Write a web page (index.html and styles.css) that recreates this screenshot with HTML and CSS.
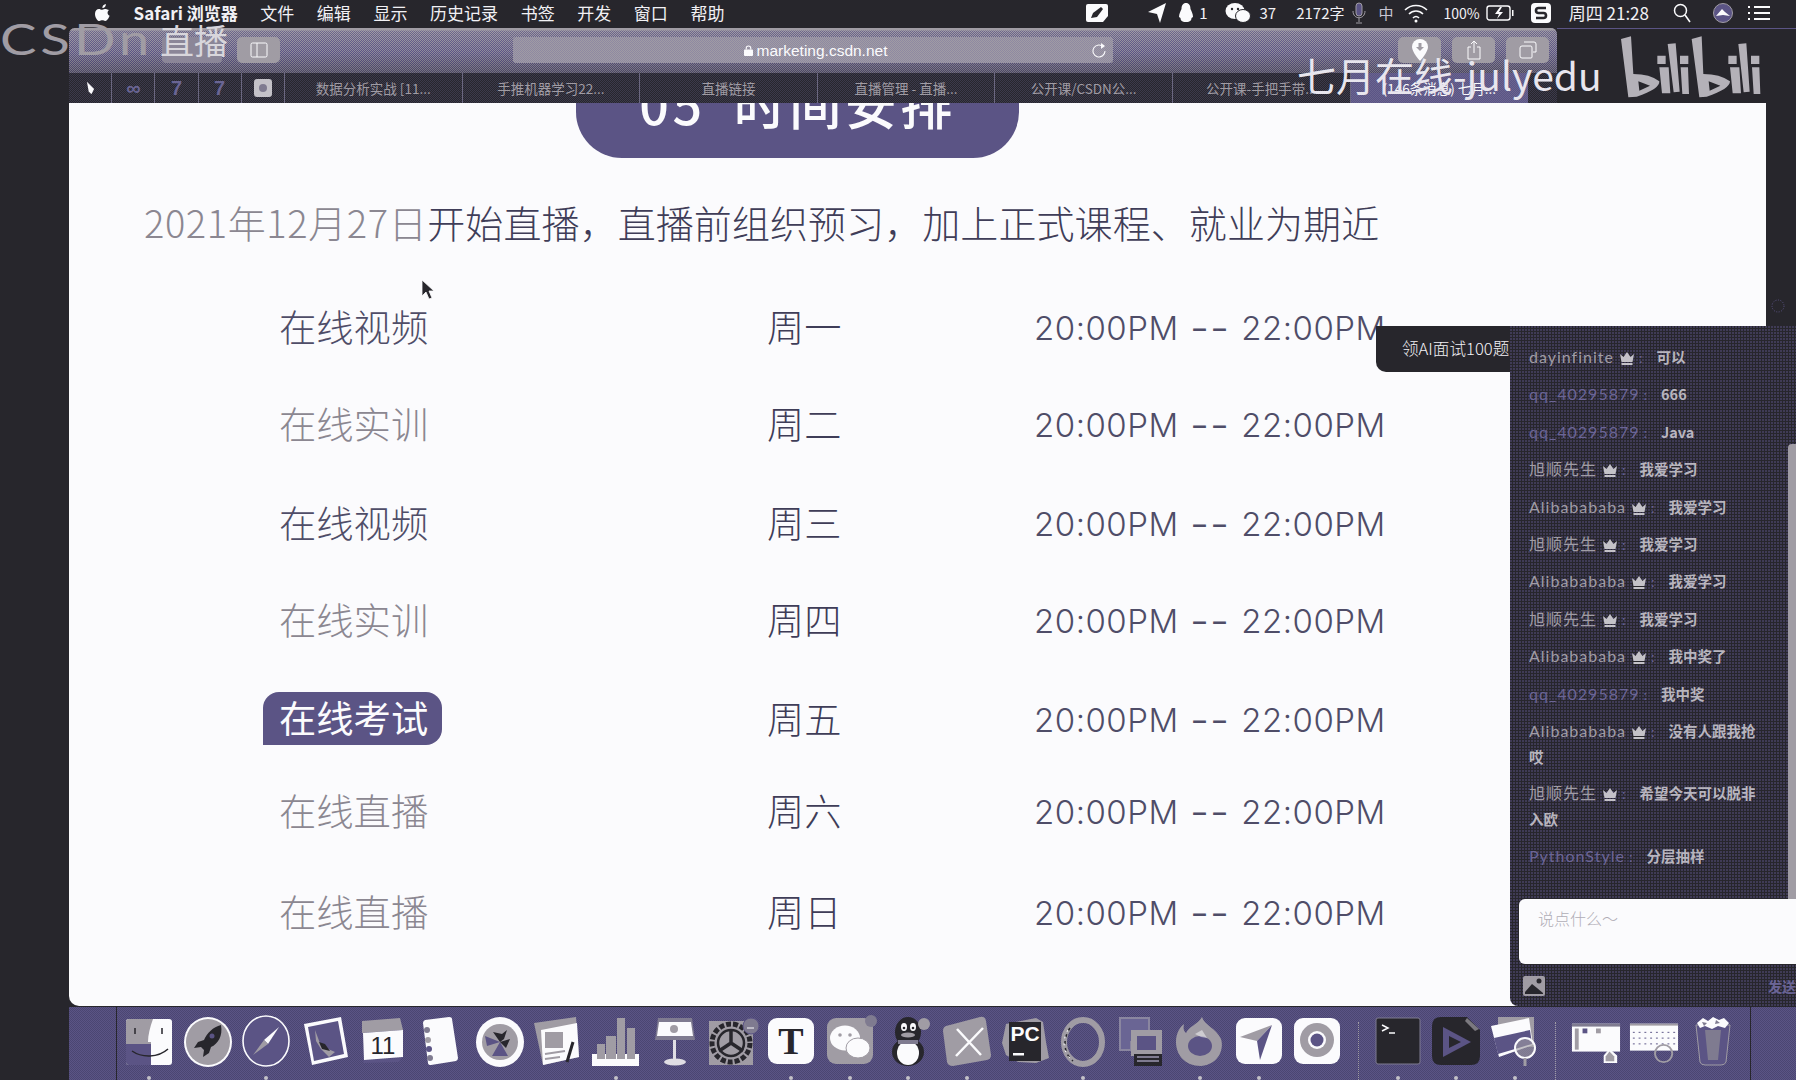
FILE: index.html
```html
<!DOCTYPE html>
<html lang="zh-CN">
<head>
<meta charset="utf-8">
<title>七月在线 直播</title>
<link rel="stylesheet" href="styles.css">
</head>
<body>
<div class="screen">
  <header class="menubar">
    <nav class="menu-left">
      <svg class="apple" viewBox="0 0 16 19" width="15" height="18"><path fill="#fbfbfd" d="M11.6 0c.1 1.2-.3 2.2-1 3-.7.8-1.700 1.300-2.700 1.200-.1-1.100.4-2.200 1-2.900C9.600.6 10.700.1 11.600 0zM15 6.400c-1 .7-1.600 1.700-1.600 2.900 0 1.400.8 2.500 2.200 3.100-.4 1.200-.9 2.200-1.600 3.200-.9 1.300-1.800 2.400-3.100 2.400-1.200 0-1.700-.7-3.100-.7s-2 .7-3.100.7c-1.300 0-2.300-1.200-3.200-2.500C.4 14 0 11.900 0 10.400 0 7.100 2.100 5.300 4.200 5.300c1.200 0 2.200.8 3 .8.700 0 1.900-.9 3.300-.9 1.100 0 2.900.4 4.500 1.200z"/></svg>
      <b class="menu-app">Safari 浏览器</b>
      <span>文件</span><span>编辑</span><span>显示</span><span>历史记录</span><span>书签</span><span>开发</span><span>窗口</span><span>帮助</span>
    </nav>
    <div class="menu-right">
      <svg class="st st-pen" viewBox="0 0 24 20" width="24" height="20"><path fill="#fbfbfd" d="M3 1h18q2 0 2 2v10l-5 6H3q-2 0-2-2V3q0-2 2-2z"/><path fill="#27262c" d="M6 15l2-5 8-6 2 2-6 8z"/></svg>
      <svg class="st st-loc" viewBox="0 0 20 22" width="20" height="22"><path fill="#fbfbfd" d="M1 10L19 1l-6 20-3-9z"/></svg>
      <svg class="st st-qq" viewBox="0 0 16 20" width="16" height="20"><path fill="#fbfbfd" d="M8 0c3 0 4.500 2.500 4.500 6 1 2 2.500 5 2.500 8l-1.500 1c0 2-1 4-5.500 4s-5.500-2-5.500-4L1 14c0-3 1.500-6 2.500-8C3.500 2.500 5 0 8 0z"/></svg>
      <span class="st-num">1</span>
      <svg class="st st-wx" viewBox="0 0 26 22" width="26" height="22"><ellipse cx="10" cy="9" rx="9.500" ry="8" fill="#fbfbfd"/><ellipse cx="18" cy="14" rx="7.500" ry="6.500" fill="#fbfbfd" stroke="#27262c"/><circle cx="7" cy="7" r="1.200" fill="#27262c"/><circle cx="13" cy="7" r="1.200" fill="#27262c"/></svg>
      <span class="st-num st-37">37</span>
      <span class="st-count">2172字</span>
      <svg class="st st-mic" viewBox="0 0 14 22" width="14" height="22"><rect x="4" y="1" width="6" height="13" rx="3" fill="#5b5485" stroke="#a09ca4"/><path fill="none" stroke="#a09ca4" d="M1 9c0 9 12 9 12 0M7 16v4M4 21h6"/></svg>
      <span class="st-zh">中</span>
      <svg class="st st-wifi" viewBox="0 0 24 20" width="24" height="20"><path fill="none" stroke="#fbfbfd" stroke-width="1.600" d="M1 7c6-6 16-6 22 0M5 11c4-4 10-4 14 0M9 15c2-2 4-2 6 0"/><circle cx="12" cy="18" r="1.500" fill="#fbfbfd"/></svg>
      <span class="st-pct">100%</span>
      <svg class="st st-bat" viewBox="0 0 28 18" width="28" height="18"><rect x="1" y="2" width="23" height="14" rx="2.500" fill="none" stroke="#fbfbfd" stroke-width="1.400"/><path fill="#fbfbfd" d="M26 6h1.500v6H26zM14 3l-5 7h4l-2 5 6-7h-4l3-5z"/></svg>
      <svg class="st st-s" viewBox="0 0 20 20" width="20" height="20"><rect width="20" height="20" rx="4" fill="#fbfbfd"/><path fill="none" stroke="#27262c" stroke-width="2.600" d="M15 5H7.500Q5 5 5 7.500T7.500 10h5q2.500 0 2.500 2.500T12.500 15H5"/></svg>
      <span class="st-time">周四 21:28</span>
      <svg class="st st-search" viewBox="0 0 18 20" width="18" height="20"><circle cx="7.500" cy="7.500" r="6" fill="none" stroke="#fbfbfd" stroke-width="1.500"/><path stroke="#fbfbfd" stroke-width="1.600" d="M12 12l5 7"/></svg>
      <svg class="st st-ava" viewBox="0 0 20 20" width="20" height="20"><circle cx="10" cy="10" r="9.500" fill="#5b5485" stroke="#a09ca4"/><path fill="#fbfbfd" d="M3 13l6-7 3 3 5 4-7-1z"/></svg>
      <svg class="st st-list" viewBox="0 0 22 16" width="22" height="16"><path stroke="#fbfbfd" stroke-width="2" d="M6 2h16M6 8h16M6 14h16"/><path stroke="#fbfbfd" stroke-width="2" d="M0 2h2M0 8h2M0 14h2"/></svg>
    </div>
  </header>

  <main class="desktop">
    <div class="window">
      <div class="browser-chrome">
        <div class="toolbar">
          <span class="nav-ghost"></span>
          <span class="tool-btn tool-side"><svg viewBox="0 0 18 16" width="18" height="16"><rect x="1" y="1" width="16" height="14" rx="1.500" fill="none" stroke="#fbfbfd"/><path stroke="#fbfbfd" d="M7 1v14"/></svg></span>
          <div class="address">
            <span class="address-text"><svg viewBox="0 0 10 12" width="9" height="11"><rect y="5" width="10" height="7" rx="1" fill="#fbfbfd"/><path fill="none" stroke="#fbfbfd" stroke-width="1.300" d="M2.500 5V3.500a2.500 2.500 0 0 1 5 0V5"/></svg> marketing.csdn.net</span>
            <svg class="reload" viewBox="0 0 16 16" width="16" height="16"><path fill="none" stroke="#fbfbfd" stroke-width="1.100" d="M12.500 5A6 6 0 1 0 14 9"/><path fill="#fbfbfd" d="M10 1l4 3-4 3z"/></svg>
          </div>
          <div class="tool-right">
            <span class="tool-btn"><svg viewBox="0 0 18 22" width="18" height="22"><path fill="#fbfbfd" d="M9 0a8 8 0 0 1 8 8c0 5-8 14-8 14S1 13 1 8a8 8 0 0 1 8-8z"/><path fill="#a09ca4" d="M7.500 4h3v4H13l-4 4-4-4h2.500z"/></svg></span>
            <span class="tool-btn"><svg viewBox="0 0 16 20" width="16" height="20"><path fill="none" stroke="#fbfbfd" d="M5 7H2v12h12V7h-3M8 13V1M5 4l3-3 3 3"/></svg></span>
            <span class="tool-btn"><svg viewBox="0 0 18 18" width="18" height="18"><path fill="none" stroke="#fbfbfd" d="M5 1h10q2 0 2 2v8h-3M1 7q0-2 2-2h9q1 0 1 2v9q0 1-1 1H3q-2 0-2-2z"/></svg></span>
          </div>
        </div>
        <div class="tabbar">
          <span class="pin"><svg viewBox="0 0 10 14" width="9" height="14"><path fill="#fbfbfd" d="M1 0l8 8-3 6-3-3z"/></svg></span>
          <span class="pin pin-p">∞</span>
          <span class="pin pin-p">7</span>
          <span class="pin pin-p">7</span>
          <span class="pin"><svg viewBox="0 0 18 18" width="18" height="18"><rect width="18" height="18" rx="3" fill="#c4c2c8"/><circle cx="9" cy="9" r="4" fill="#7f7b90"/></svg></span>
          <span class="tab">数据分析实战 [11...</span>
          <span class="tab">手推机器学习22...</span>
          <span class="tab">直播链接</span>
          <span class="tab">直播管理 - 直播...</span>
          <span class="tab">公开课/CSDN公...</span>
          <span class="tab">公开课-手把手带...</span>
          <span class="tab tab-active">(146条消息) 七月...</span>
        </div>
      </div>
      <section class="content">
        <h1 class="title-pill">05 时间安排</h1>
        <p class="intro"><span class="intro-date">2021年12月27日</span>开始直播，直播前组织预习，加上正式课程、就业为期近</p>
        <div class="schedule">
          <div class="s-name dark">在线视频</div><div class="s-day">周一</div><div class="s-time">20:00PM <span class="dash">--</span> 22:00PM</div>
          <div class="s-name">在线实训</div><div class="s-day">周二</div><div class="s-time">20:00PM <span class="dash">--</span> 22:00PM</div>
          <div class="s-name dark">在线视频</div><div class="s-day">周三</div><div class="s-time">20:00PM <span class="dash">--</span> 22:00PM</div>
          <div class="s-name">在线实训</div><div class="s-day">周四</div><div class="s-time">20:00PM <span class="dash">--</span> 22:00PM</div>
          <div class="s-name"><span class="s-hl">在线考试</span></div><div class="s-day">周五</div><div class="s-time">20:00PM <span class="dash">--</span> 22:00PM</div>
          <div class="s-name">在线直播</div><div class="s-day">周六</div><div class="s-time">20:00PM <span class="dash">--</span> 22:00PM</div>
          <div class="s-name">在线直播</div><div class="s-day">周日</div><div class="s-time">20:00PM <span class="dash">--</span> 22:00PM</div>
        </div>
      </section>
    </div>
  </main>

  <footer class="dock">
    <div class="tile run"><svg viewBox="0 0 50 50"><rect x="2" y="3" width="46" height="46" rx="3" fill="#fbfbfd"/><path fill="#a09ca4" d="M5 3h24c-3 8-5 16-5 23h3v23H5a3 3 0 0 1-3-3V6a3 3 0 0 1 3-3z"/><path fill="#5b5485" d="M2 28h25v21H5a3 3 0 0 1-3-3z"/><path fill="none" stroke="#27262c" stroke-width="1.500" d="M11 12v6M38 12v6M8 35c10 7 26 7 36-2"/></svg></div>
    <div class="tile"><svg viewBox="0 0 50 50"><ellipse cx="25" cy="26" rx="24" ry="25" fill="#fbfbfd"/><ellipse cx="25" cy="26" rx="22" ry="23" fill="#a09ca4"/><path fill="#27262c" d="M38 9c-8 2-14 8-17 15l-6 2-4 6 7-1 3 3-1 7 6-4 2-6c7-3 12-11 10-22z"/><circle cx="29" cy="20" r="2.500" fill="#5b5485"/></svg></div>
    <div class="tile run"><svg viewBox="0 0 50 50"><ellipse cx="25" cy="25" rx="23" ry="25" fill="#5b5485" stroke="#fbfbfd" stroke-width="1.600"/><path fill="#fbfbfd" d="M38 11L27 28l-4-4z"/><path fill="#a09ca4" d="M12 39l11-15 4 4z"/></svg></div>
    <div class="tile"><svg viewBox="0 0 50 50"><path fill="#fbfbfd" d="M5 8L42 1l7 40-36 8z"/><path fill="#5b5485" d="M9 11l30-6 6 33-30 7z"/><path fill="#a09ca4" d="M16 14l6 16 14 6-6 5-8-8-5-8z"/><path fill="#27262c" d="M20 26l6 2 5 7-8-2z"/></svg></div>
    <div class="tile"><svg viewBox="0 0 50 50"><path fill="#5b5485" d="M5 47l36-1 3-4-38 2z"/><path fill="#a09ca4" d="M4 5l38-3 3 12-41 3z"/><path fill="#fbfbfd" d="M5 17l40-3 0 27-39 3z"/><text class="cal-num" x="25" y="38">11</text></svg></div>
    <div class="tile"><svg viewBox="0 0 50 50"><path fill="#fbfbfd" d="M7 7q0-2 2-3L33 1q3 0 3 2l6 39q0 2-2 3L15 49q-3 0-3-2z"/><circle cx="11" cy="14" r="3" fill="#7f7b90"/><circle cx="12" cy="24" r="3" fill="#a09ca4"/><circle cx="13" cy="33" r="3" fill="#5b5485"/><circle cx="14" cy="42" r="3" fill="#7f7b90"/></svg></div>
    <div class="tile"><svg viewBox="0 0 50 50"><ellipse cx="25" cy="26" rx="24" ry="25" fill="#fbfbfd"/><circle cx="25" cy="26" r="18" fill="#a09ca4"/><path fill="#5b5485" d="M25 26l-8 14h16zM25 26L10 20l2 10z"/><path fill="#27262c" d="M25 26l-7-10 9 2 5-4-3 9zM25 26l6 6 4-9z"/></svg></div>
    <div class="tile"><svg viewBox="0 0 50 50"><path fill="#a09ca4" d="M1 7L43 1l3 40-36 8z"/><path fill="#fbfbfd" d="M8 14l36-7 2 34-36 8z"/><rect x="12" y="16" width="18" height="16" fill="#a09ca4"/><path stroke="#a09ca4" stroke-width="2" d="M12 38l20-3M12 43l15-2"/><path stroke="#27262c" stroke-width="3" d="M40 26l-6 20"/></svg></div>
    <div class="tile run"><svg viewBox="0 0 50 50"><rect x="1" y="38" width="47" height="12" fill="#fbfbfd"/><rect x="15" y="20" width="10" height="23" fill="#a09ca4"/><rect x="26" y="2" width="8" height="41" fill="#a09ca4"/><rect x="36" y="12" width="8" height="31" fill="#a09ca4"/><rect x="6" y="28" width="8" height="15" fill="#a09ca4"/></svg></div>
    <div class="tile"><svg viewBox="0 0 50 50"><path fill="#7f7b90" d="M8 2h34l3 22H5z"/><path fill="#fbfbfd" d="M9 6h32l2 14H7z"/><circle cx="24" cy="13" r="4" fill="#a09ca4"/><rect x="23" y="24" width="3" height="20" fill="#e0dee4"/><ellipse cx="25" cy="46" rx="11" ry="3.500" fill="#e0dee4"/></svg></div>
    <div class="tile"><svg viewBox="0 0 50 50"><rect x="1" y="5" width="44" height="44" fill="#a09ca4"/><circle cx="23" cy="27" r="19" fill="none" stroke="#27262c" stroke-width="5" stroke-dasharray="5 2"/><circle cx="23" cy="27" r="13" fill="none" stroke="#27262c" stroke-width="2.500"/><path stroke="#27262c" stroke-width="3.500" d="M23 27V13M23 27l12 8M23 27l-12 8"/><circle cx="43" cy="10" r="8" fill="#7f7b90" stroke="#5b5485"/><path stroke="#fbfbfd" d="M39 12h7"/></svg></div>
    <div class="tile run"><svg viewBox="0 0 50 50"><rect x="2" y="2" width="46" height="46" rx="9" fill="#fbfbfd"/><text class="t-glyph" x="25" y="38">T</text></svg></div>
    <div class="tile run"><svg viewBox="0 0 50 50"><rect x="2" y="2" width="46" height="46" rx="9" fill="#a09ca4"/><ellipse cx="20" cy="22" rx="15" ry="12.500" fill="#fbfbfd"/><ellipse cx="33" cy="32" rx="12" ry="10" fill="#fbfbfd" stroke="#a09ca4"/><circle cx="15" cy="19" r="1.800" fill="#a09ca4"/><circle cx="25" cy="19" r="1.800" fill="#a09ca4"/><circle cx="46" cy="5" r="6" fill="#7f7b90"/></svg></div>
    <div class="tile run"><svg viewBox="0 0 50 50"><ellipse cx="25" cy="16" rx="13" ry="15" fill="#27262c"/><ellipse cx="25" cy="36" rx="16" ry="14" fill="#27262c"/><ellipse cx="25" cy="37" rx="11" ry="12" fill="#fbfbfd"/><ellipse cx="21" cy="11" rx="3" ry="4" fill="#fbfbfd"/><ellipse cx="30" cy="11" rx="3" ry="4" fill="#fbfbfd"/><circle cx="21" cy="12" r="1.300" fill="#27262c"/><circle cx="30" cy="12" r="1.300" fill="#27262c"/><ellipse cx="25" cy="19" rx="7" ry="2.500" fill="#a09ca4"/><rect x="15" y="24" width="20" height="4" fill="#7f7b90"/><circle cx="41" cy="8" r="6" fill="#a09ca4"/></svg></div>
    <div class="tile run"><svg viewBox="0 0 50 50"><path fill="#a09ca4" d="M4 10L38 1q5-1 6 4l5 34q0 4-4 5L11 50q-5 0-6-4L1 15q0-4 3-5z"/><path stroke="#fbfbfd" stroke-width="2.500" d="M15 13l24 26M41 12L14 40"/></svg></div>
    <div class="tile"><svg viewBox="0 0 50 50"><path fill="#a09ca4" d="M6 8l30-6 7 4 3 20 3 16-13 5-18-1-12-7-4-12z"/><rect x="9" y="6" width="32" height="39" fill="#27262c"/><text class="pc-glyph" x="25" y="25">PC</text><rect x="13" y="37" width="11" height="2.500" fill="#fbfbfd"/></svg></div>
    <div class="tile run"><svg viewBox="0 0 50 50"><ellipse cx="25" cy="26" rx="19" ry="22" fill="none" stroke="#a09ca4" stroke-width="6"/><path fill="none" stroke="#27262c" stroke-width="1.500" stroke-dasharray="3 4" d="M12 12C4 24 6 38 15 45"/><path fill="none" stroke="#fbfbfd" stroke-width="1" stroke-dasharray="2 5" d="M10 14C3 26 6 38 14 44"/></svg></div>
    <div class="tile"><svg viewBox="0 0 50 50"><path fill="#6a6594" stroke="#8a86a0" stroke-width="2" d="M3 2h29v24H14v8H3z"/><path fill="#a09ca4" d="M14 14h31v26H14z"/><path fill="#5b5485" d="M20 20h19v14H20z"/><path fill="#27262c" d="M17 38h28v12H17z"/><path fill="#7f7b90" d="M20 40h22v2H20zM20 44h22v2H20z"/></svg></div>
    <div class="tile run"><svg viewBox="0 0 50 50"><path fill="#a09ca4" d="M27 1c2 8 14 11 19 22 3 9-1 25-20 27C9 50 1 38 1 26 1 17 5 11 9 8c-1 5 0 7 2 9 3-7 11-8 16-16z"/><ellipse cx="25" cy="30" rx="12" ry="10" fill="#5b5485"/><path fill="#fbfbfd" d="M20 18l7-4 5 8-6-1z" opacity=".5"/></svg></div>
    <div class="tile run"><svg viewBox="0 0 50 50"><rect x="2" y="2" width="46" height="46" rx="9" fill="#fbfbfd"/><path fill="#a09ca4" d="M38 9L6 21l17 4z"/><path fill="#5b5485" d="M38 9L23 25l3 19z"/></svg></div>
    <div class="tile"><svg viewBox="0 0 50 50"><rect x="2" y="2" width="46" height="46" rx="9" fill="#fbfbfd"/><circle cx="25" cy="24" r="17" fill="#a09ca4"/><circle cx="25" cy="24" r="9" fill="#fbfbfd"/><circle cx="25" cy="24" r="6.500" fill="#5b5485"/></svg></div>
    <div class="dock-sep"></div>
    <div class="tile run"><svg viewBox="0 0 50 50"><rect x="3" y="2" width="44" height="46" rx="2" fill="#27262c" stroke="#7f7b90"/><path fill="none" stroke="#fbfbfd" stroke-width="1.500" d="M9 9l6 3-6 3M16 17h6"/></svg></div>
    <div class="tile run"><svg viewBox="0 0 50 50"><path fill="#27262c" d="M10 1h26l13 13v26q0 9-9 9H10q-9 0-9-9V10q0-9 9-9z"/><path fill="#5b5485" d="M12 11l28 15-28 15z"/><path fill="#27262c" d="M18 20l12 6-12 6z"/><path fill="#a09ca4" d="M36 2l12 11-4 2-10-10z" opacity=".7"/></svg></div>
    <div class="tile run"><svg viewBox="0 0 50 50"><path fill="#a09ca4" d="M8 1h36v30H8z"/><path fill="#fbfbfd" d="M1 10l38-8 4 27-34 12z"/><path fill="#5b5485" d="M4 22l36-8 2 14-34 10z"/><path fill="#fbfbfd" d="M6 12l26-6v2L6 14z"/><circle cx="35" cy="32" r="10" fill="#a09ca4" fill-opacity=".6" stroke="#fbfbfd" stroke-width="2"/><path stroke="#a09ca4" stroke-width="3" d="M35 42v8"/></svg></div>
    <div class="dock-sep"></div>
    <div class="tile thumb"><svg viewBox="0 0 52 50"><rect x="1" y="7" width="50" height="29" fill="#fbfbfd"/><rect x="1" y="7" width="50" height="3" fill="#7f7b90"/><rect x="4" y="12" width="4" height="22" fill="#a09ca4"/><rect x="12" y="12" width="5" height="5" fill="#5b5485"/><rect x="26" y="12" width="5" height="5" fill="#a09ca4"/><path fill="#fbfbfd" d="M34 48V40l6-7 8 7v8z"/><path fill="#a09ca4" d="M36 46v-5l4-5 5 5v5z"/></svg></div>
    <div class="tile thumb"><svg viewBox="0 0 52 50"><rect x="1" y="7" width="50" height="28" fill="#fbfbfd"/><path stroke="#5b5485" stroke-dasharray="2 4" d="M4 16h44M4 22h44M4 28h44"/><rect x="1" y="7" width="50" height="2" fill="#a09ca4"/><circle cx="36" cy="38" r="9" fill="none" stroke="#a09ca4" stroke-width="2"/></svg></div>
    <div class="tile"><svg viewBox="0 0 50 50"><path fill="#5b5485" stroke="#a09ca4" d="M8 9h34l-4 37q-1 3-5 3H17q-4 0-5-3z"/><path fill="#7f7b90" d="M17 14h16l-3 30h-10z"/><path fill="#fbfbfd" d="M9 7l6-5 5 3 5-4 6 3 5-2 5 5-4 5-7-2-6 3-7-3-5 2z"/><path fill="#7f7b90" d="M14 6l5 1-3 3zM28 4l4 3-5 1z"/></svg></div>
  </footer>

  <aside class="chat">
    <div class="chat-list">
      <p class="msg"><span class="who">dayinfinite</span><svg class="crown" viewBox="0 0 16 14"><use href="#crown"/></svg><span class="colon">:</span><span class="say">可以</span></p>
      <p class="msg"><span class="who plain">qq_40295879</span><span class="colon">:</span><span class="say">666</span></p>
      <p class="msg"><span class="who plain">qq_40295879</span><span class="colon">:</span><span class="say">Java</span></p>
      <p class="msg"><span class="who">旭顺先生</span><svg class="crown" viewBox="0 0 16 14"><use href="#crown"/></svg><span class="colon">:</span><span class="say">我爱学习</span></p>
      <p class="msg"><span class="who">Alibabababa</span><svg class="crown" viewBox="0 0 16 14"><use href="#crown"/></svg><span class="colon">:</span><span class="say">我爱学习</span></p>
      <p class="msg"><span class="who">旭顺先生</span><svg class="crown" viewBox="0 0 16 14"><use href="#crown"/></svg><span class="colon">:</span><span class="say">我爱学习</span></p>
      <p class="msg"><span class="who">Alibabababa</span><svg class="crown" viewBox="0 0 16 14"><use href="#crown"/></svg><span class="colon">:</span><span class="say">我爱学习</span></p>
      <p class="msg"><span class="who">旭顺先生</span><svg class="crown" viewBox="0 0 16 14"><use href="#crown"/></svg><span class="colon">:</span><span class="say">我爱学习</span></p>
      <p class="msg"><span class="who">Alibabababa</span><svg class="crown" viewBox="0 0 16 14"><use href="#crown"/></svg><span class="colon">:</span><span class="say">我中奖了</span></p>
      <p class="msg"><span class="who plain">qq_40295879</span><span class="colon">:</span><span class="say">我中奖</span></p>
      <p class="msg"><span class="who">Alibabababa</span><svg class="crown" viewBox="0 0 16 14"><use href="#crown"/></svg><span class="colon">:</span><span class="say">没有人跟我抢哎</span></p>
      <p class="msg"><span class="who">旭顺先生</span><svg class="crown" viewBox="0 0 16 14"><use href="#crown"/></svg><span class="colon">:</span><span class="say">希望今天可以脱非入欧</span></p>
      <p class="msg"><span class="who plain">PythonStyle</span><span class="colon">:</span><span class="say">分层抽样</span></p>
    </div>
    <div class="chat-input">说点什么～</div>
    <div class="chat-foot">
      <svg viewBox="0 0 22 20" width="22" height="20"><rect width="22" height="20" rx="2" fill="#a09ca4"/><circle cx="16" cy="5" r="2.500" fill="#27262c"/><path fill="#27262c" d="M2 16l7-8 5 4 6 5v1H2z"/></svg>
      <span class="send">发送</span>
    </div>
    <span class="chat-scroll"></span>
  </aside>
  <div class="ai-tip">领AI面试100题</div>

  <svg class="cursor" viewBox="0 0 14 22" width="14" height="22"><path fill="#27262c" stroke="#fbfbfd" stroke-width=".8" d="M1 1v16l4-4 3 7 3-1-3-7h5z"/></svg>
  <svg class="ring" viewBox="0 0 16 16" width="16" height="16"><circle cx="8" cy="8" r="6" fill="none" stroke="#5b5485" stroke-dasharray="1 1.500"/></svg>
  <span class="edge-line"></span>

  <div class="wm-csdn"><span class="wm-csdn-en">CSDn</span><span class="wm-csdn-cn">直播</span></div>
  <div class="wm-july">七月在线-julyedu</div>
  <svg class="wm-bili" viewBox="0 0 528 270" width="176" height="90" role="img" aria-label="bilibili"><g fill="#b4b1b8"><path fill-rule="evenodd" d="M3 45l30-8 7 113q50 0 78 22 2 23-68 46l-25 2zM55 172l3 28 32-15z"/><path d="M112 95h25v25h-25zM118 130h28l5 78h-25zM143 60l24-2 12 145-18 2zM180 95h25v25h-25zM182 130h22l3 80h-20z"/><path fill-rule="evenodd" d="M215 45l30-8 5 113q50 0 80 22 0 23-70 46l-22 2zM266 172l3 28 32-15z"/><path d="M325 95h25v25h-25zM330 130h28l5 78h-25zM355 60l24-2 10 145-18 2zM393 95h25v25h-25zM396 130h22l3 80h-20z"/></g></svg>

  <svg class="defs" width="0" height="0"><defs><path id="crown" fill="#c4c2c8" d="M1 3l3.500 3L8 1l3.500 5L15 3l-1.500 8h-11zM2.500 12h11v2h-11z"/></defs></svg>
</div>
</body>
</html>
```

FILE: styles.css
```css
* { box-sizing: border-box; }
html, body { margin: 0; height: 100%; background: #27262c; overflow: hidden; }
body { font-family: "Noto Sans CJK SC", "Noto Sans", sans-serif; color: #fbfbfd; }
.screen { position: relative; width: 1796px; height: 1080px; overflow: hidden; display: flex; flex-direction: column; background: #27262c; }

/* menu bar */
.menubar { height: 28px; flex: none; display: flex; justify-content: space-between; align-items: center; padding-bottom: 3px; font-size: 17px; color: #f2f1f5; position: relative; z-index: 5; }
.menu-left { display: flex; align-items: center; gap: 22.600px; padding-left: 95px; white-space: nowrap; }
.apple { margin-right: 1px; }
.menu-app { font-weight: 700; }
.menu-right { display: flex; align-items: center; white-space: nowrap; padding-right: 26px; font-size: 15px; }
.st { flex: none; }
.st-loc { margin-left: 38px; }
.st-qq { margin-left: 11px; }
.st-num { margin-left: 5px; }
.st-wx { margin-left: 17px; }
.st-num.st-37 { margin-left: 9px; }
.st-count { margin-left: 20px; font-size: 15px; }
.st-mic { margin-left: 8px; }
.st-zh { margin-left: 12px; color: #c8c5d2; }
.st-wifi { margin-left: 10px; }
.st-pct { margin-left: 16px; font-size: 14px; }
.st-bat { margin-left: 6px; }
.st-s { margin-left: 17px; }
.st-time { margin-left: 18px; font-size: 17px; }
.st-search { margin-left: 24px; }
.st-ava { margin-left: 22px; }
.st-list { margin-left: 15px; }

/* window */
.desktop { flex: 1; min-height: 0; padding-left: 69px; }
.window { height: 100%; display: flex; flex-direction: column; }
.browser-chrome { width: 1488px; flex: none; border-radius: 6px 6px 0 0; overflow: hidden; }
.toolbar {
  height: 45px; display: flex; align-items: center; padding: 0 8px 2px 93px; position: relative;
  background-image: linear-gradient(180deg, #a09ca4 0, #a09ca4 2px, rgba(160,156,164,.25) 3px, rgba(91,84,133,.25) 24px, rgba(39,38,44,.35) 45px), repeating-conic-gradient(#a09ca4 0 25%, #5b5485 0 50%);
  background-size: auto, 2px 2px;
}
.nav-ghost { width: 60px; height: 26px; border-radius: 4px; background: #8b8698; flex: none; }
.tool-btn { width: 43px; height: 26px; border-radius: 5px; background: #a09ca4; display: flex; align-items: center; justify-content: center; flex: none; }
.tool-side { margin-left: 15px; }
.address {
  width: 600px; height: 26px; margin-left: 233px; flex: none; position: relative; display: flex; align-items: center; justify-content: center;
  background-image: repeating-conic-gradient(#a09ca4 0 25%, #8e89a2 0 50%); background-size: 2px 2px; border-radius: 3px;
}
.address-text { font-family: "Liberation Sans", sans-serif; font-size: 15.500px; color: #fbfbfd; display: flex; align-items: center; gap: 4px; margin-left: 5px; margin-top: 2px; }
.reload { position: absolute; right: 6px; top: 5px; }
.tool-right { margin-left: auto; display: flex; gap: 11px; }

.tabbar {
  height: 30px; display: flex; align-items: stretch; font-size: 13.500px; color: #a09ca4;
  background-image: repeating-conic-gradient(#27262c 0 25%, #3c3a4c 0 50%); background-size: 2px 2px;
}
.pin { width: 43.200px; flex: none; display: flex; align-items: center; justify-content: center; border-right: 1px solid #6b6780; font-family: "Liberation Sans", sans-serif; font-weight: 700; font-size: 20px; }
.pin-p { color: #6a6594; }
.tab { width: 177.600px; flex: none; display: flex; align-items: center; justify-content: center; border-right: 1px solid #6b6780; white-space: nowrap; }
.tab-active { background-image: repeating-conic-gradient(#5b5485 0 25%, #6a6590 0 50%); background-size: 2px 2px; color: #fbfbfd; border-right: 0; }

/* slide */
.content { width: 1697px; flex: 1; min-height: 0; background: #fbfbfd; border-radius: 0 0 0 10px; overflow: hidden; display: flex; flex-direction: column; }
.title-pill { margin: -28px 0 0 507px; width: 443px; height: 83px; flex: none; background: #5b5485; border-radius: 0 0 46px 46px; font-size: 52px; font-weight: 500; line-height: 56px; letter-spacing: 3.500px; word-spacing: 13px; text-align: center; color: #fbfbfd; white-space: pre; }
.intro { margin: 36px 0 0 75px; font-size: 38px; letter-spacing: .08px; line-height: 56px; color: #3f3d58; white-space: nowrap; font-weight: 300; flex: none; }
.intro-date { color: #8b8791; letter-spacing: .6px; }
.schedule { margin-top: 28px; display: grid; grid-template-columns: 488px 267px 1fr; grid-template-rows: 95px 99px 100px 94px 104px 80px 122px; padding-left: 210px; align-items: center; }
.s-name { font-size: 37.300px; line-height: 50px; color: #8b8791; white-space: nowrap; font-weight: 300; }
.s-name.dark { color: #4f4d68; }
.s-hl { display: inline-block; margin-left: -16px; padding: 0 14px 0 16px; height: 53px; line-height: 50px; background: #5b5485; color: #fbfbfd; border-radius: 16px 16px 16px 0; font-weight: 400; }
.s-day { font-size: 37.200px; line-height: 50px; color: #3f3d58; white-space: nowrap; font-weight: 300; }
.s-time { font-family: "Inter", "Liberation Sans", sans-serif; font-weight: 300; font-size: 33px; letter-spacing: .5px; word-spacing: 1.500px; color: #4f4d68; white-space: pre; padding-top: 4px; }
.dash { font-size: 42px; letter-spacing: 1px; vertical-align: -3px; line-height: 1; }

/* dock */
.dock {
  height: 74px; flex: none; margin-left: 69px; position: relative; display: flex; align-items: flex-start; padding: 9px 0 0 51px;
  background-image: repeating-conic-gradient(#5b5485 0 25%, #4b4672 0 50%); background-size: 2px 2px;
  border-top: 1px solid #27262c;
}
.dock::before { content: ""; position: absolute; left: 47px; top: 0; bottom: 0; width: 1px; background: #27262c; }
.dock::after { content: ""; position: absolute; left: 1681px; top: 0; bottom: 0; width: 1px; background: #27262c; }
.tile { width: 58.400px; flex: none; height: 64px; position: relative; }
.tile > svg { display: block; width: 50px; height: 50px; margin: 0 auto; overflow: visible; }
.tile.run::after { content: ""; position: absolute; left: 50%; bottom: 0; width: 4px; height: 4px; margin-left: -2px; border-radius: 50%; background: #c4c2c8; }
.dock-sep { width: 22.600px; height: 58px; flex: none; position: relative; margin-top: 6px; }
.dock-sep::before { content: ""; position: absolute; left: 50%; top: 0; bottom: 0; border-left: 1px dotted #a09ca4; }
.cal-num { font-family: "Liberation Sans", sans-serif; font-size: 24px; fill: #27262c; text-anchor: middle; }
.t-glyph { font-family: "Liberation Serif", serif; font-size: 38px; font-weight: 700; fill: #27262c; text-anchor: middle; }
.pc-glyph { font-family: "Liberation Sans", sans-serif; font-size: 21px; font-weight: 700; fill: #fbfbfd; text-anchor: middle; }

/* chat */
.chat {
  position: absolute; z-index: 3; left: 1510px; top: 326px; width: 286px; height: 680px; display: flex; flex-direction: column; border-radius: 0 0 0 8px;
  background-color: #27262c; background-image: radial-gradient(circle at 1px 1px, #5b5485 .6px, transparent .8px); background-size: 3px 3px;
}
.chat-list { flex: 1; min-height: 0; padding: 18px 30px 0 19px; overflow: hidden; }
.msg { margin: 0 0 11.400px; line-height: 25px; font-size: 14.500px; color: #b8b5be; font-weight: 700; }
.who { font-family: "Lato", "Noto Sans CJK SC", sans-serif; font-size: 16px; font-weight: 400; letter-spacing: 1px; color: #a09ca4; }
.who.plain { color: #6b6596; }
.crown { width: 16px; height: 14px; margin-left: 5px; vertical-align: -2px; }
.colon { font-family: "Lato", sans-serif; font-weight: 400; color: #6b6596; margin: 0 14px 0 4px; font-size: 14px; }
.say { font-weight: 700; }
.chat-input { flex: none; height: 65px; margin: 1px 0 0 9px; padding: 7px 19px; background: #fbfbfd; border-radius: 6px 0 0 6px; font-size: 16px; font-weight: 300; color: #b0adb6; }
.chat-foot { flex: none; height: 41px; display: flex; justify-content: space-between; align-items: center; padding: 0 0 0 13px; margin-top: 1px; }
.send { font-size: 14px; font-weight: 700; color: #6b6596; }
.chat-scroll { position: absolute; right: 0; top: 118px; width: 8px; height: 455px; background: #a09ca4; border-radius: 4px 0 0 0; }
.ai-tip { position: absolute; z-index: 2; left: 1376px; top: 326px; width: 160px; height: 46px; padding-left: 26px; line-height: 44px; font-size: 16.600px; font-weight: 300; background: #27262c; border-radius: 0 0 0 10px; white-space: nowrap; overflow: hidden; color: #f2f1f5; }

/* overlays */
.cursor { position: absolute; z-index: 4; left: 421px; top: 279px; }
.ring { position: absolute; z-index: 4; left: 1770px; top: 298px; }
.edge-line { position: absolute; z-index: 1; left: 1557px; right: 0; top: 28px; height: 1px; background: #5b5485; }
.defs { position: absolute; }
.wm-csdn { position: absolute; z-index: 6; left: 0; top: 16px; display: flex; align-items: center; height: 46px; white-space: nowrap; }
.wm-csdn-en { display: inline-block; font-family: "Lato", sans-serif; font-weight: 400; font-size: 42px; letter-spacing: 3px; color: #a09ca4; width: 160px; transform: scaleX(1.3); transform-origin: left center; }
.wm-csdn-cn { font-size: 34px; color: #d8d6dc; }
.wm-july { position: absolute; z-index: 6; left: 1297px; top: 48px; font-size: 39px; line-height: 52px; color: #e8e6ee; white-space: nowrap; }
.wm-bili { position: absolute; z-index: 6; left: 1620px; top: 24px; }
```
